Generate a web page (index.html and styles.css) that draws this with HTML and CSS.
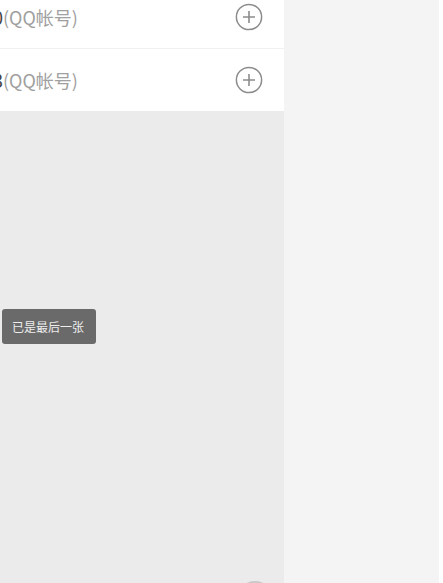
FILE: index.html
```html
<!DOCTYPE html>
<html lang="zh">
<head>
<meta charset="utf-8">
<title>QQ帐号</title>
<link rel="stylesheet" href="styles.css">
</head>
<body>
<div class="screen">
  <aside class="panel">
    <ul class="list">
      <li class="row">
        <span class="name"><span class="num">10</span><span class="tag">(QQ帐号)</span></span>
        <svg class="add" viewBox="0 0 28 28" width="28" height="28"><circle cx="14" cy="14" r="12.6" fill="none" stroke="#8c8c8c" stroke-width="1.5"/><path d="M14 8v12M8 14h12" stroke="#8c8c8c" stroke-width="1.6" fill="none"/></svg>
      </li>
      <li class="row">
        <span class="name"><span class="num">13</span><span class="tag">(QQ帐号)</span></span>
        <svg class="add" viewBox="0 0 28 28" width="28" height="28"><circle cx="14" cy="14" r="12.6" fill="none" stroke="#8c8c8c" stroke-width="1.5"/><path d="M14 8v12M8 14h12" stroke="#8c8c8c" stroke-width="1.6" fill="none"/></svg>
      </li>
    </ul>
    <div class="stage">
      <div class="toast">已是最后一张</div>
    </div>
    <div class="knob"></div>
  </aside>
  <main class="main"></main>
  <div class="edge"></div>
</div>
</body>
</html>
```
FILE: styles.css
```css
html, body {
  margin: 0;
  padding: 0;
  height: 100%;
  overflow: hidden;
}
body {
  font-family: "Noto Sans CJK SC", "Noto Sans", sans-serif;
  background: #f4f4f4;
}
.screen {
  display: flex;
  height: 583px;
}
.panel {
  position: relative;
  width: 284px;
  flex: none;
  background: #ebebeb;
  display: flex;
  flex-direction: column;
  overflow: hidden;
}
.list {
  list-style: none;
  margin: -14px 0 0 0;
  padding: 0;
  background: #fff;
}
.row {
  height: 62px;
  display: flex;
  align-items: center;
  justify-content: space-between;
  padding: 0 21px 0 0;
  box-sizing: content-box;
}
.row + .row {
  border-top: 1px solid #f0f0f0;
}
.name {
  margin-left: -17px;
  font-size: 18px;
  white-space: nowrap;
}
.num {
  color: #404040;
}
.tag {
  color: #a0a0a0;
}
.add {
  display: block;
}
.stage {
  flex: 1;
  display: flex;
  align-items: flex-start;
  padding: 198px 0 0 2px;
}
.toast {
  width: 74px;
  height: 35px;
  padding: 0 10px;
  background: #6a6a6a;
  color: #eeeeee;
  border-radius: 3px;
  font-size: 12px;
  line-height: 35px;
  white-space: nowrap;
}
.knob {
  position: absolute;
  left: 236px;
  top: 581px;
  width: 38px;
  height: 38px;
  border-radius: 50%;
  background: #c9c9c9;
}
.main {
  flex: 1;
  background: #f4f4f4;
}
.edge {
  width: 4px;
  flex: none;
  background: #fff;
}
```
